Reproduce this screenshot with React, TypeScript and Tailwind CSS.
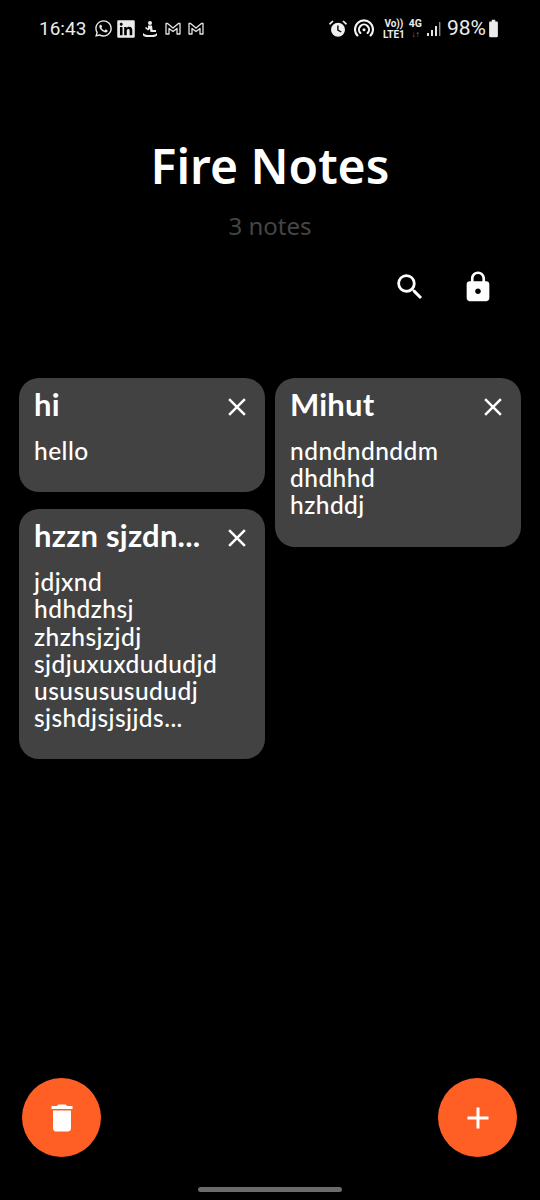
import React from "react";
import { FaWhatsapp, FaLinkedin } from "react-icons/fa";
import { MdSearch, MdLock, MdClose, MdDelete, MdAdd, MdBatteryFull } from "react-icons/md";

function Gmail() {
  return (
    <svg width="16" height="13" viewBox="0 0 16 13" fill="none" stroke="#e5e5e5" strokeWidth="1.3" strokeLinejoin="round">
      <path d="M1 12V1.5h1.6L8 6l5.4-4.5H15V12h-3V6.5L8 9.6 4 6.5V12Z" />
    </svg>
  );
}

function Rider() {
  return (
    <svg width="16" height="18" viewBox="0 0 16 18" fill="#ececec">
      <circle cx="8" cy="3" r="2" />
      <path d="M6 5.5h4l.6 4.5H14v2H8.6L7.8 9 6 10.5 3 8l1-1 2 1.4Z" />
      <path d="M1 13c2 2 4 2 7 2s5 0 7-2v2.4c-2 1.6-4 1.6-7 1.6s-5 0-7-1.6Z" />
    </svg>
  );
}

function Alarm() {
  return (
    <svg width="18" height="18" viewBox="0 0 18 18" fill="#f0f0f0">
      <path d="M1 5 4.6 1.4 3.4.4 0 3.6Zm16 0-3.6-3.6L14.6.4 18 3.6Z" />
      <path fillRule="evenodd" d="M9 2.8a7 7 0 1 0 0 14 7 7 0 0 0 0-14ZM8.2 5.4h1.4v4.3l3 1.8-.7 1.1-3.7-2.2Z" />
    </svg>
  );
}

function Hotspot() {
  return (
    <svg width="20" height="20" viewBox="0 0 20 20" fill="none" stroke="#f4f4f4" strokeWidth="2.1" strokeLinecap="round">
      <path d="M3.4 16.5a9 9 0 1 1 13.2 0" />
      <path d="M6.4 14a5 5 0 1 1 7.2 0" />
      <circle cx="10" cy="10.8" r="1.5" fill="#f4f4f4" stroke="none" />
    </svg>
  );
}

function Signal() {
  return (
    <svg width="15" height="16" viewBox="0 0 15 16" fill="#e5e5e5">
      <rect x="1" y="12" width="2" height="3" />
      <rect x="5" y="9" width="2" height="6" />
      <rect x="9" y="5" width="2" height="10" />
      <rect x="13" y="1" width="1.4" height="14" fill="#8a8a8a" />
    </svg>
  );
}

function Note({ title, lines }: { title: string; lines: string[] }) {
  return (
    <div className="rounded-[20px] bg-[#424242] pl-[15px] pr-[13px] pt-[6px] pb-[28px] font-['Lato',sans-serif] text-white">
      <div className="flex items-start justify-between">
        <span className="text-[31px] leading-[40px] font-bold tracking-[0.2px]">{title}</span>
        <MdClose size={30} color="#ffffff" className="mt-[8px]" />
      </div>
      <div className="mt-[13px] text-[24.5px] leading-[27.2px] font-medium tracking-[0.45px]">
        {lines.map((l) => (
          <div key={l}>{l}</div>
        ))}
      </div>
    </div>
  );
}

export default function App() {
  return (
    <div className="relative h-[1200px] w-[540px] overflow-hidden bg-black font-['Noto_Sans',sans-serif]">
      <div className="flex h-[56px] items-center justify-between pl-[39px] pr-[36px] pt-[1px] text-[#ececec]">
        <div className="flex items-center">
          <span className="text-[19px] leading-none font-['Roboto',sans-serif]">16:43</span>
          <FaWhatsapp size={19} className="ml-[8px]" />
          <FaLinkedin size={20} className="ml-[3px]" />
          <span className="ml-[6px] flex"><Rider /></span>
          <span className="ml-[7px] flex"><Gmail /></span>
          <span className="ml-[7px] flex"><Gmail /></span>
        </div>
        <div className="flex items-center">
          <Alarm />
          <span className="w-[7px]" />
          <Hotspot />
          <div className="ml-[9px] flex flex-col items-center font-['Roboto',sans-serif] text-[10px] leading-[11px] font-bold">
            <span>Vo))</span>
            <span>LTE1</span>
          </div>
          <div className="ml-[4px] flex flex-col items-center font-['Roboto',sans-serif] text-[10.5px] leading-[12px] font-bold">
            <span>4G</span>
            <span className="text-[8px] leading-[9px] text-[#8a8a8a]">↓↑</span>
          </div>
          <span className="w-[4px]" />
          <Signal />
          <span className="ml-[6px] font-['Roboto',sans-serif] text-[21px] leading-none">98%</span>
          <MdBatteryFull size={21} className="ml-[-3px]" />
        </div>
      </div>

      <h1 className="mt-[79px] text-center text-[48px] leading-[62px] font-semibold text-white">Fire Notes</h1>
      <p className="mt-[13px] text-center text-[24px] leading-[32px] text-[#454545]">3 notes</p>

      <div className="mt-[28px] flex items-center justify-end gap-[34px] pr-[45px]">
        <MdSearch size={34} color="#ffffff" />
        <MdLock size={34} color="#ffffff" />
      </div>

      <div className="mt-[74px] flex gap-[10px] px-[19px]">
        <div className="flex w-[246px] flex-col gap-[17px]">
          <Note title="hi" lines={["hello"]} />
          <Note
            title="hzzn sjzdn..."
            lines={["jdjxnd", "hdhdzhsj", "zhzhsjzjdj", "sjdjuxuxdududjd", "ususususududj", "sjshdjsjsjjds..."]}
          />
        </div>
        <div className="w-[246px]">
          <Note title="Mihut" lines={["ndndndnddm", "dhdhhd", "hzhddj"]} />
        </div>
      </div>

      <button className="absolute left-[22px] top-[1078px] flex h-[79px] w-[79px] items-center justify-center rounded-full bg-[#ff5f24]">
        <MdDelete size={36} color="#ffffff" />
      </button>
      <button className="absolute left-[438px] top-[1078px] flex h-[79px] w-[79px] items-center justify-center rounded-full bg-[#ff5f24]">
        <MdAdd size={36} color="#ffffff" />
      </button>
      <div className="absolute left-[198px] top-[1187px] h-[5px] w-[144px] rounded-full bg-[#6b6b6b]" />
    </div>
  );
}
